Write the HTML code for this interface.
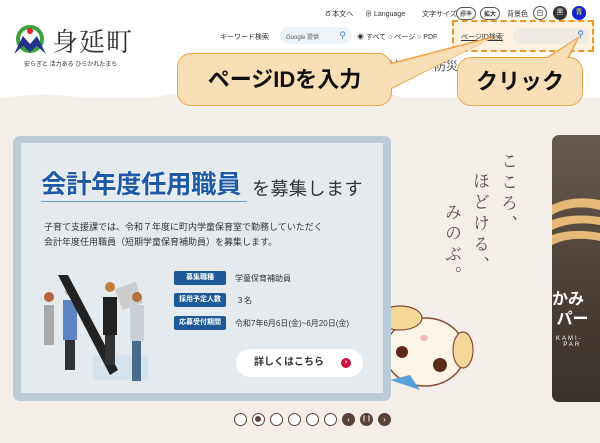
<!DOCTYPE html>
<html><head><meta charset="utf-8"><style>
*{margin:0;padding:0;box-sizing:border-box}
body{width:600px;height:443px;overflow:hidden;background:#f3efe8;font-family:"Liberation Sans","Noto Sans CJK JP",sans-serif;position:relative;color:#333}
.abs{position:absolute}
.hdr{left:0;top:0;width:600px;height:98px;background:#fff}
.t{font-size:8px;color:#333;white-space:nowrap}
.pill{border:1px solid #555;border-radius:8px;font-size:6px;padding:1px 3px}
.circ{border-radius:50%;width:14px;height:14px;font-size:7px;text-align:center;line-height:13px}
.call{background:#f9dfb5;border:1.5px solid #f0a248;border-radius:14px;font-weight:bold;color:#111;text-align:center}
.lab{background:#1d5a97;color:#fff;font-size:7px;font-weight:bold;width:52px;height:14px;line-height:14px;text-align:center;border-radius:2px}
.dot{width:13px;height:13px;border-radius:50%;background:#fff;border:1.5px solid #5a4236;top:413px}
.ddot{width:13px;height:13px;border-radius:50%;background:#5a4236;top:413px;color:#fff;font-size:8px;text-align:center;line-height:13px}
.vt{font-size:17px;color:#5a4a40;writing-mode:vertical-rl;font-family:'Liberation Serif','Noto Serif CJK SC',serif;letter-spacing:4px;white-space:nowrap}
</style></head><body>
<div class="abs hdr"></div>
<svg class="abs" style="left:0;top:90px" width="600" height="16"><path d="M0 8 Q40 2 80 7 T160 6 T240 8 T320 5 T400 7 T480 4 T560 6 T600 5 V16 H0Z" fill="#f3efe8"/></svg>
<svg class="abs" style="left:13px;top:24px" width="36" height="32"><circle cx="17" cy="15" r="12" fill="none" stroke="#3aa43a" stroke-width="4"/><circle cx="17" cy="7" r="3" fill="#e8202a"/><path d="M1 30 L10 12 L17 20 L24 12 L33 30 L24 22 L17 28 L10 22Z" fill="#24338a"/></svg>
<div class="abs" style="left:52px;top:22px;font-size:26px;color:#333;font-family:'Liberation Serif','Noto Serif CJK SC',serif;letter-spacing:1px">身延町</div>
<div class="abs t" style="left:24px;top:59px;font-size:6px">安らぎと 活力ある ひらかれたまち</div>
<div class="abs t" style="left:325px;top:9px;font-size:7px">ⵒ 本文へ</div>
<div class="abs t" style="left:365px;top:9px;font-size:7px">⊕ Language</div>
<div class="abs t" style="left:422px;top:9px;font-size:7px">文字サイズ</div>
<div class="abs pill" style="left:456px;top:7px">標準</div>
<div class="abs pill" style="left:480px;top:7px;font-weight:bold">拡大</div>
<div class="abs t" style="left:507px;top:9px;font-size:7px">背景色</div>
<div class="abs circ" style="left:533px;top:6px;border:1px solid #555">白</div>
<div class="abs circ" style="left:553px;top:6px;background:#333;color:#fff">黒</div>
<div class="abs circ" style="left:572px;top:6px;background:#1020d8;color:#ff0">青</div>
<div class="abs t" style="left:220px;top:32px;font-size:7px">キーワード検索</div>
<div class="abs" style="left:280px;top:27px;width:72px;height:17px;background:#eef3f8;border-radius:9px;font-size:6px;padding:5px 6px;color:#555">Google 提供<span style="position:absolute;right:6px;top:3px;color:#3a7fd0;font-size:9px">⚲</span></div>
<div class="abs t" style="left:357px;top:32px;font-size:7px">◉ すべて ○ ページ ○ PDF</div>
<div class="abs" style="left:452px;top:20px;width:142px;height:32px;border:2px dashed #f0962a;background:#fdf1e0"></div>
<div class="abs t" style="left:461px;top:32px;font-size:7px;text-decoration:underline">ページID検索</div>
<div class="abs" style="left:513px;top:28px;width:76px;height:16px;background:#eee9e2;border-radius:8px"><span style="position:absolute;right:5px;top:1px;color:#3a7fd0;font-size:9px">⚲</span></div>
<div class="abs t" style="left:388px;top:57px;font-size:12px;color:#444">祉</div>
<div class="abs" style="left:423px;top:61px;width:7px;height:7px;background:#f0962a"></div>
<div class="abs t" style="left:434px;top:57px;font-size:12px;color:#444">防災</div>
<svg class="abs" style="left:0;top:0" width="600" height="120"><path d="M385 65 L493 37 L388 90Z" fill="#f9dfb5" stroke="#f0a248" stroke-width="1.5" stroke-linejoin="round"/><path d="M540 62 L578 38 L565 65Z" fill="#f9dfb5" stroke="#f0a248" stroke-width="1.5"/></svg>
<div class="abs call" style="left:177px;top:53px;width:215px;height:53px;font-size:22px;line-height:51px">ページIDを入力</div>
<div class="abs call" style="left:457px;top:57px;width:126px;height:49px;font-size:22px;line-height:47px">クリック</div>
<svg class="abs" style="left:0;top:0" width="600" height="120"><path d="M386 66 L492 38 L389 89" fill="#f9dfb5" stroke="none"/><path d="M542 62 L577 39 L563 64Z" fill="#f9dfb5"/></svg>
<div class="abs vt" style="left:495px;top:152px">こころ、</div>
<div class="abs vt" style="left:467px;top:172px">ほどける、</div>
<div class="abs vt" style="left:439px;top:203px">みのぶ。</div>
<svg class="abs" style="left:380px;top:290px" width="100" height="110">
<ellipse cx="45" cy="62" rx="40" ry="34" fill="#fdf6e6" stroke="#8a4a3a" stroke-width="1.5"/>
<ellipse cx="20" cy="28" rx="22" ry="12" fill="#f6d79a" stroke="#8a4a3a" stroke-width="1.2"/>
<ellipse cx="83" cy="60" rx="10" ry="18" fill="#f6d79a" stroke="#8a4a3a" stroke-width="1.2"/>
<circle cx="22" cy="62" r="6" fill="#5a2a1a"/><circle cx="60" cy="75" r="7" fill="#5a2a1a"/>
<ellipse cx="44" cy="48" rx="4" ry="3" fill="#f0b8b0"/>
<path d="M10 90 L40 100 L30 85Z" fill="#5aa0d8"/>
</svg>
<div class="abs" style="left:13px;top:136px;width:378px;height:265px;background:#b9ccd7;border-radius:7px"></div>
<div class="abs" style="left:21px;top:143px;width:362px;height:250px;background:#e4eaee"></div>
<div class="abs" style="left:41px;top:164px;font-size:25.5px;font-weight:bold;color:#1e5aa8;white-space:nowrap;letter-spacing:-0.5px;text-shadow:0 0 2px #fff,0 0 2px #fff">会計年度任用職員</div>
<div class="abs" style="left:41px;top:201px;width:206px;height:1px;background:#6a9ad0"></div>
<div class="abs" style="left:252px;top:175px;font-size:18px;color:#333;white-space:nowrap;letter-spacing:0.5px">を募集します</div>
<div class="abs t" style="left:44px;top:220px;font-size:9px;line-height:15px">子育て支援課では、令和７年度に町内学童保育室で勤務していただく<br>会計年度任用職員（短期学童保育補助員）を募集します。</div>
<div class="abs lab" style="left:174px;top:271px">募集職種</div>
<div class="abs lab" style="left:174px;top:293px">採用予定人数</div>
<div class="abs lab" style="left:174px;top:316px">応募受付期間</div>
<div class="abs t" style="left:235px;top:273px">学童保育補助員</div>
<div class="abs t" style="left:236px;top:295px">３名</div>
<div class="abs t" style="left:235px;top:318px">令和7年6月6日(金)~6月20日(金)</div>
<div class="abs" style="left:236px;top:349px;width:127px;height:28px;background:#fff;border-radius:14px;font-size:10px;font-weight:bold;line-height:28px;padding-left:18px">詳しくはこちら<span style="position:absolute;right:12px;top:9px;width:10px;height:10px;border-radius:50%;background:#c8103c;color:#fff;font-size:7px;line-height:10px;text-align:center">›</span></div>
<svg class="abs" style="left:38px;top:275px" width="120" height="120">
<rect x="55" y="80" width="55" height="25" fill="#cfe0ee" opacity=".7"/>
<rect x="6" y="30" width="10" height="40" fill="#aaa"/><circle cx="11" cy="22" r="5" fill="#b5653d"/>
<rect x="25" y="25" width="14" height="40" fill="#5b84c0"/><circle cx="32" cy="16" r="5" fill="#aaa"/><rect x="27" y="65" width="10" height="30" fill="#333"/>
<path d="M20 0 L30 0 L80 95 L72 100Z" fill="#222"/>
<rect x="65" y="22" width="14" height="38" fill="#222"/><circle cx="72" cy="12" r="5" fill="#c08040"/><rect x="67" y="60" width="10" height="30" fill="#333"/>
<rect x="80" y="10" width="22" height="22" fill="#ccc" transform="rotate(-20 91 21)"/>
<rect x="92" y="30" width="14" height="36" fill="#c9d0d8"/><circle cx="99" cy="22" r="5" fill="#b57040"/><rect x="94" y="66" width="9" height="40" fill="#4a6a8a"/>
</svg>
<div class="abs" style="left:552px;top:135px;width:60px;height:267px;background:linear-gradient(#6a5a4c,#4a3e35 60%,#3a322c);border-radius:7px 0 0 7px"></div>
<svg class="abs" style="left:552px;top:195px" width="48" height="60"><path d="M0 10 Q20 0 48 5 V15 Q20 8 0 20Z M0 25 Q20 18 48 22 V30 Q20 25 0 35Z M0 40 Q20 33 48 38 V46 Q20 40 0 50Z" fill="#e7b878"/></svg>
<div class="abs" style="left:552px;top:290px;color:#fff;font-size:16px;font-weight:bold;line-height:20px;white-space:nowrap">かみ<br>&nbsp;パー</div>
<div class="abs" style="left:556px;top:336px;color:#fff;font-size:6px;letter-spacing:2px;white-space:nowrap">KAMI-<br>&nbsp;&nbsp;PAR</div>
<div class="abs dot" style="left:234px"></div>
<div class="abs dot" style="left:252px"><div style="width:6px;height:6px;border-radius:50%;background:#5a4236;margin:2px"></div></div>
<div class="abs dot" style="left:270px"></div>
<div class="abs dot" style="left:288px"></div>
<div class="abs dot" style="left:306px"></div>
<div class="abs dot" style="left:324px"></div>
<div class="abs ddot" style="left:342px">‹</div>
<div class="abs ddot" style="left:360px;font-size:6px">❙❙</div>
<div class="abs ddot" style="left:378px">›</div>
</body></html>
